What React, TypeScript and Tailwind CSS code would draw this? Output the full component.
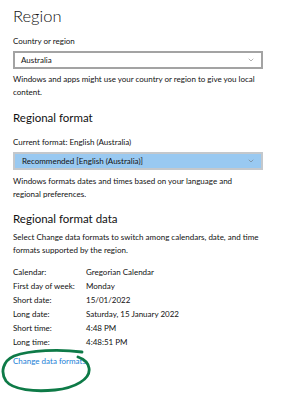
import { ChevronDown } from "lucide-react";

const rows = [
  { label: "Calendar:", value: "Gregorian Calendar" },
  { label: "First day of week:", value: "Monday" },
  { label: "Short date:", value: "15/01/2022" },
  { label: "Long date:", value: "Saturday, 15 January 2022" },
  { label: "Short time:", value: "4:48 PM" },
  { label: "Long time:", value: "4:48:51 PM" },
];

export default function App() {
  return (
    <div
      className="w-[301px] h-[400px] bg-white text-[#111] overflow-hidden relative"
      style={{ fontFamily: "Lato, 'Noto Sans', sans-serif" }}
    >
      <div className="pl-[13px] w-[263px] pt-[4px]">
        {/* Region */}
        <h1 className="text-[16.5px] font-light leading-[24px]">Region</h1>
        <div className="text-[8px] leading-[13px] mt-[7px]">Country or region</div>
        <div className="mt-[3px] h-[18px] border-2 border-[#a3a3a3] flex items-center justify-between pl-[6px] pr-[6px]">
          <span className="text-[8px]">Australia</span>
          <ChevronDown className="w-[8px] h-[8px] text-[#666]" strokeWidth={1.5} />
        </div>
        <p className="text-[8px] leading-[13px] mt-[4px] pr-[2px]">
          Windows and apps might use your country or region to give you local content.
        </p>

        {/* Regional format */}
        <h2 className="text-[11.5px] leading-[16px] mt-[11px]">Regional format</h2>
        <div className="text-[8px] leading-[13px] mt-[10px]">Current format: English (Australia)</div>
        <div className="mt-[3px] h-[18px] border-2 border-[#c4c8cc] bg-[#99c9f1] flex items-center justify-between pl-[7px] pr-[6px]">
          <span className="text-[8px]">Recommended [English (Australia)]</span>
          <ChevronDown className="w-[8px] h-[8px] text-[#666]" strokeWidth={1.5} />
        </div>
        <p className="text-[8px] leading-[13px] mt-[5px] pr-[2px]">
          Windows formats dates and times based on your language and regional preferences.
        </p>

        {/* Regional format data */}
        <h2 className="text-[11.5px] leading-[16px] mt-[10px]">Regional format data</h2>
        <p className="text-[8px] leading-[13px] mt-[4px] pr-[2px]">
          Select Change data formats to switch among calendars, date, and time formats supported by the region.
        </p>
        <div className="mt-[8px] flex flex-col">
          {rows.map((r) => (
            <div key={r.label} className="flex text-[8px] leading-[14px]">
              <span className="w-[73px] shrink-0">{r.label}</span>
              <span>{r.value}</span>
            </div>
          ))}
        </div>
        <a className="block mt-[6px] text-[8px] leading-[13px] text-[#1a80d6]">Change data formats</a>
      </div>

      {/* hand-drawn annotation */}
      <svg className="absolute left-0 top-[340px]" width="110" height="60" viewBox="0 340 110 60" fill="none">
        <path
          d="M82 352 C 60 349, 30 350, 14 356 C 3 361, 0 372, 6 381 C 13 390, 35 392, 55 390 C 75 388, 91 379, 89 368 C 88 362, 84 359, 78 357"
          stroke="#0e7a47"
          strokeWidth="2.8"
          strokeLinecap="round"
        />
      </svg>
    </div>
  );
}
